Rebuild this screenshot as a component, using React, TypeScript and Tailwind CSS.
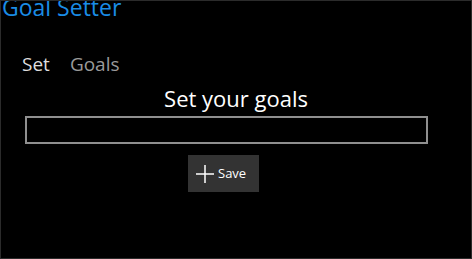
export default function App() {
  return (
    <div className="w-[472px] h-[259px] bg-black border border-[#2b2b2b] overflow-hidden font-['Open_Sans',sans-serif] flex flex-col">
      <h1 className="text-[23px] leading-[23px] text-[#1a8ce6] pl-[1px] -mt-[5px] whitespace-nowrap">Goal Setter</h1>

      {/* tabs */}
      <nav className="flex items-baseline gap-[20px] pl-[21px] mt-[36px] text-[19px] leading-[19px]">
        <span className="text-[#dedede]">Set</span>
        <span className="text-[#9a9a9a]">Goals</span>
      </nav>

      <h2 className="self-center mt-[13px] text-[22px] leading-[22px] text-white">Set your goals</h2>

      <input
        type="text"
        className="ml-[24px] mt-[7px] w-[403px] h-[28px] border-2 border-[#8f8f8f] bg-black text-white outline-none"
      />

      <button className="ml-[187px] mt-[11px] w-[71px] h-[37px] bg-[#333333] flex items-center pl-[8px] gap-[4px] text-white">
        <svg width="18" height="18" viewBox="0 0 18 18" className="shrink-0">
          <path d="M0 9h18M9 0v18" stroke="#ffffff" strokeWidth="1.5" fill="none" />
        </svg>
        <span className="text-[13px] leading-[13px]">Save</span>
      </button>
    </div>
  );
}
